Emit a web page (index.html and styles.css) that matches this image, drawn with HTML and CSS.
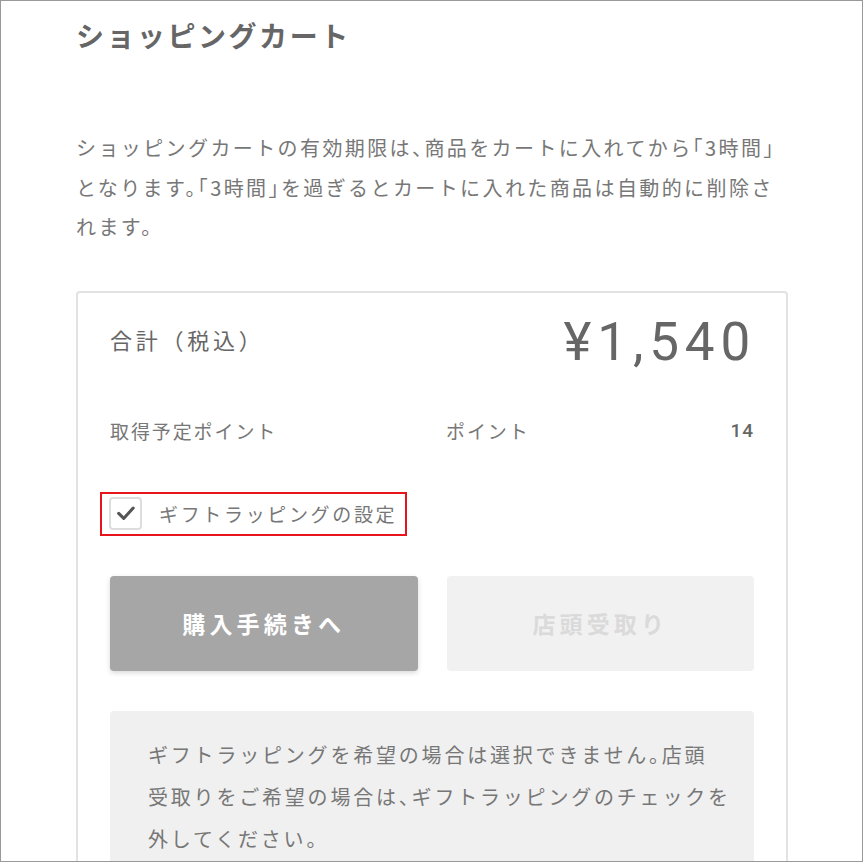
FILE: index.html
```html
<!DOCTYPE html>
<html lang="ja">
<head>
  <meta charset="UTF-8">
  <title>ショッピングカート</title>
  <link rel="stylesheet" href="styles.css">
</head>
<body>
  <div class="frame">
    <div class="cart">
      <h1 class="title">ショッピングカート</h1>

      <p class="lead">ショッピングカートの有効期限は、商品をカートに入れてから「3時間」となります。「3時間」を過ぎるとカートに入れた商品は自動的に削除されます。</p>

      <div class="summary">
        <div class="total">
          <span class="total-label">合計（税込）</span>
          <span class="total-price">¥1,540</span>
        </div>

        <div class="points">
          <span class="points-label">取得予定ポイント</span>
          <span class="points-unit">ポイント</span>
          <span class="points-value">14</span>
        </div>

        <label class="gift">
          <span class="checkbox">
            <svg width="32" height="32" viewBox="0 0 32 32">
              <path d="M8.5 16.5 L14 22 L24.5 10.5" fill="none" stroke="#555" stroke-width="3.4" stroke-linecap="round" stroke-linejoin="round"/>
            </svg>
          </span>
          <span class="gift-text">ギフトラッピングの設定</span>
        </label>

        <div class="actions">
          <a class="btn btn-buy" href="#">購入手続きへ</a>
          <a class="btn btn-store" href="#">店頭受取り</a>
        </div>

        <div class="notice">
          ギフトラッピングを希望の場合は選択できません。店頭<br>受取りをご希望の場合は、ギフトラッピングのチェックを<br>外してください。
        </div>
      </div>
    </div>
  </div>
</body>
</html>
```

FILE: styles.css
```css
* { box-sizing: border-box; }
body {
  margin: 0;
  background: #fff;
  font-family: "Noto Sans CJK JP", "Noto Sans", sans-serif;
  color: #777;
}
.frame {
  width: 863px;
  height: 862px;
  border: 1px solid #999;
  overflow: hidden;
  padding: 0 0 0 75px;
}
.cart { width: 712px; }

.title {
  margin: 0;
  padding-top: 14px;
  font-size: 28px;
  line-height: 40px;
  font-weight: bold;
  letter-spacing: 0.09em;
  color: #666;
}

.lead {
  margin: 73px 0 0;
  font-size: 20px;
  line-height: 39.5px;
  letter-spacing: 0.12em;
  font-feature-settings: "halt";
}

.summary {
  margin-top: 44px;
  border: 2px solid #e2e2e2;
  border-radius: 4px;
  padding: 15px 32px 60px;
}

.total {
  display: flex;
  justify-content: space-between;
  align-items: center;
  height: 62px;
}
.total-label {
  font-size: 22px;
  letter-spacing: 0.17em;
  color: #666;
}
.total-price {
  margin: 7px -2px 0 0;
  font-family: Roboto, "Liberation Sans", sans-serif;
  font-size: 53px;
  font-weight: 400;
  letter-spacing: 0.11em;
  color: #666;
}

.points {
  display: grid;
  grid-template-columns: 336px 1fr auto;
  align-items: center;
  margin-top: 47px;
  font-size: 19px;
  line-height: 28px;
  letter-spacing: 0.1em;
}
.points-value {
  font-family: Roboto, "Liberation Sans", sans-serif;
  font-weight: 500;
  color: #666;
  letter-spacing: 0.05em;
}

.gift {
  display: inline-flex;
  align-items: center;
  gap: 17px;
  margin: 47px 0 0 -10px;
  padding: 3px 8px 4px 7px;
  border: 2px solid #e8141b;
  cursor: pointer;
}
.checkbox {
  display: flex;
  width: 33px;
  height: 33px;
  border: 2px solid #ddd;
  border-radius: 4px;
  background: #fff;
  align-items: center;
  justify-content: center;
}
.gift-text {
  font-size: 19px;
  letter-spacing: 0.14em;
}

.actions {
  display: grid;
  grid-template-columns: 1fr 1fr;
  gap: 29px;
  margin-top: 40px;
}
.btn {
  display: flex;
  align-items: center;
  justify-content: center;
  height: 95px;
  border-radius: 4px;
  font-size: 23px;
  font-weight: bold;
  letter-spacing: 0.18em;
  text-decoration: none;
}
.btn-buy {
  background: #a6a6a6;
  color: #fff;
  box-shadow: 0 2px 5px rgba(0,0,0,0.15);
}
.btn-store {
  background: #f1f1f1;
  color: #dadada;
}

.notice {
  margin-top: 40px;
  background: #f0f0f0;
  border-radius: 4px;
  padding: 23px 12px 30px 38px;
  font-size: 20px;
  line-height: 42px;
  letter-spacing: 0.14em;
  font-feature-settings: "halt";
}
```
